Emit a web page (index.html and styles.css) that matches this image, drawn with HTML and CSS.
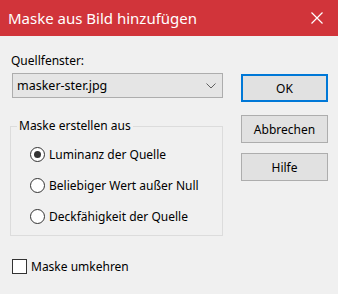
FILE: index.html
```html
<!DOCTYPE html>
<html lang="de">
<head>
  <meta charset="UTF-8">
  <title>Maske aus Bild hinzufügen</title>
  <link rel="stylesheet" href="styles.css">
</head>
<body>

  <div class="dialog">
    <header class="titlebar">
      <span class="title">Maske aus Bild hinzufügen</span>
      <svg class="close" width="12" height="12" viewBox="0 0 12 12">
        <path d="M0.5 0.5 L11.5 11.5 M11.5 0.5 L0.5 11.5" stroke="#fff" stroke-width="1.2" fill="none"/>
      </svg>
    </header>

    <div class="main">
      <div class="left">
        <div class="label">Quellfenster:</div>
        <div class="select">
          <span>masker-ster.jpg</span>
          <svg width="10" height="6" viewBox="0 0 10 6">
            <path d="M0.5 0.5 L5 5 L9.5 0.5" stroke="#606060" stroke-width="1" fill="none"/>
          </svg>
        </div>

        <fieldset class="group">
          <legend>Maske erstellen aus</legend>
          <div class="radio-row"><span class="radio checked"></span>Luminanz der Quelle</div>
          <div class="radio-row"><span class="radio"></span>Beliebiger Wert außer Null</div>
          <div class="radio-row"><span class="radio"></span>Deckfähigkeit der Quelle</div>
        </fieldset>
      </div>

      <div class="buttons">
        <button class="btn default">OK</button>
        <button class="btn cancel">Abbrechen</button>
        <button class="btn">Hilfe</button>
      </div>
    </div>

    <div class="check-row"><span class="check"></span>Maske umkehren</div>
  </div>

</body>
</html>
```

FILE: styles.css
```css
body {
  margin: 0;
  font-family: 'Noto Sans', 'Open Sans', sans-serif;
  font-size: 12px;
  color: #000;
  background: #f0f0f0;
}

.dialog {
  width: 338px;
  height: 294px;
  background: #f0f0f0;
}

.titlebar {
  height: 36px;
  background-color: #d1343a;
  color: #fff;
  display: flex;
  align-items: center;
  justify-content: space-between;
  padding: 0 15px 0 8px;
}

.title {
  font-size: 15px;
}

.main {
  display: flex;
  padding: 0 10px;
  gap: 18px;
}

.left {
  width: 213px;
}

.label {
  line-height: 16px;
  margin: 17px 0 0 1px;
}

.select {
  display: flex;
  align-items: center;
  justify-content: space-between;
  box-sizing: border-box;
  height: 25px;
  width: 211px;
  margin: 4px 0 0 2px;
  padding: 0 6px 0 4px;
  background: #e5e5e5;
  border: 1px solid #adadad;
  font-size: 12.5px;
}

.group {
  margin: 20px 0 0 0;
  padding: 10px 0 9px 6px;
  border: 1px solid #dcdcdc;
  min-width: 0;
}

.group legend {
  padding: 0 2px;
  line-height: 16px;
}

.radio-row {
  display: flex;
  align-items: center;
  height: 20px;
  padding-left: 13px;
}

.radio-row + .radio-row {
  margin-top: 11px;
}

.radio {
  box-sizing: border-box;
  width: 15px;
  height: 15px;
  margin-right: 4px;
  border: 1px solid #333;
  border-radius: 50%;
  background: #fff;
  display: flex;
  align-items: center;
  justify-content: center;
}

.radio.checked::after {
  content: "";
  width: 7px;
  height: 7px;
  border-radius: 50%;
  background: #333;
}

.buttons {
  display: flex;
  flex-direction: column;
  padding-top: 38px;
}

.btn {
  box-sizing: border-box;
  width: 87px;
  height: 28px;
  background: #e1e1e1;
  border: 1px solid #adadad;
  font-family: inherit;
  font-size: 12px;
  color: #000;
  padding: 0;
}

.btn.default {
  border: 2px solid #0078d7;
}

.btn.cancel {
  margin: 13px 0 10px;
}

.check-row {
  display: flex;
  align-items: center;
  height: 16px;
  margin: 22px 0 0 12px;
}

.check {
  box-sizing: border-box;
  width: 15px;
  height: 15px;
  margin-right: 4px;
  border: 1px solid #333;
  background: #fff;
}
```
